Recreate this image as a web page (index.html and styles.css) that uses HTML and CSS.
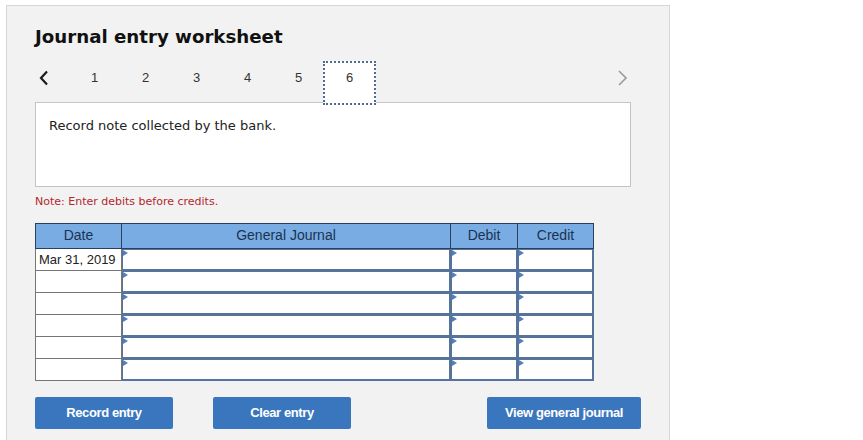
FILE: index.html
```html
<!DOCTYPE html>
<html>
<head>
<meta charset="utf-8">
<link rel="stylesheet" href="styles.css">
</head>
<body>
<div class="panel">
  <h1 class="title">Journal entry worksheet</h1>
  <div class="nav">
    <div class="nav-prev">
      <svg width="12" height="16" viewBox="0 0 12 16"><polyline points="9,1.5 3,8 9,14.5" fill="none" stroke="#1a1a1a" stroke-width="2.2"/></svg>
    </div>
    <div class="tab">1</div>
    <div class="tab">2</div>
    <div class="tab">3</div>
    <div class="tab">4</div>
    <div class="tab">5</div>
    <div class="tab tab-active">6</div>
    <div class="nav-spacer"></div>
    <div class="nav-next">
      <svg width="12" height="18" viewBox="0 0 12 18"><polyline points="2,2 9,9 2,16" fill="none" stroke="#9a9a9a" stroke-width="1.6"/></svg>
    </div>
  </div>
  <div class="desc">Record note collected by the bank.</div>
  <div class="note">Note: Enter debits before credits.</div>
  <table class="journal">
    <colgroup>
      <col class="c-date"><col class="c-gj"><col class="c-dr"><col class="c-cr">
    </colgroup>
    <thead>
      <tr><th>Date</th><th>General Journal</th><th>Debit</th><th>Credit</th></tr>
    </thead>
    <tbody>
      <tr><td class="date">Mar 31, 2019</td><td class="in"><div class="box"></div></td><td class="in"><div class="box"></div></td><td class="in"><div class="box"></div></td></tr>
      <tr><td class="date"></td><td class="in"><div class="box"></div></td><td class="in"><div class="box"></div></td><td class="in"><div class="box"></div></td></tr>
      <tr><td class="date"></td><td class="in"><div class="box"></div></td><td class="in"><div class="box"></div></td><td class="in"><div class="box"></div></td></tr>
      <tr><td class="date"></td><td class="in"><div class="box"></div></td><td class="in"><div class="box"></div></td><td class="in"><div class="box"></div></td></tr>
      <tr><td class="date"></td><td class="in"><div class="box"></div></td><td class="in"><div class="box"></div></td><td class="in"><div class="box"></div></td></tr>
      <tr><td class="date"></td><td class="in"><div class="box"></div></td><td class="in"><div class="box"></div></td><td class="in"><div class="box"></div></td></tr>
    </tbody>
  </table>
  <div class="actions">
    <button class="btn btn-record">Record entry</button>
    <button class="btn btn-clear">Clear entry</button>
    <div class="spacer"></div>
    <button class="btn btn-view">View general journal</button>
  </div>
</div>
</body>
</html>
```
FILE: styles.css
```css
html, body {
  margin: 0;
  padding: 0;
  background: #ffffff;
}
body {
  font-family: "DejaVu Sans", Verdana, sans-serif;
  color: #222;
}
.panel {
  margin: 5px 0 0 6px;
  height: 440px;
  box-sizing: border-box;
  width: 664px;
  background: #f2f2f2;
  border: 1px solid #d6d6d6;
  border-bottom: none;
  padding: 0 0 0 28px;
}
.title {
  margin: 0;
  padding-top: 20px;
  height: 35px;
  font-size: 18.2px;
  font-weight: bold;
  color: #111;
  line-height: 22px;
}
.nav {
  display: flex;
  height: 44px;
  width: 596px;
}
.nav-prev {
  width: 34px;
  padding-top: 9px;
  padding-left: 3px;
  box-sizing: border-box;
}
.tab {
  width: 51px;
  height: 44px;
  box-sizing: border-box;
  text-align: center;
  padding-top: 9px;
  font-family: "Liberation Sans", Arial, sans-serif;
  font-size: 13px;
  color: #333;
}
.tab-active {
  background: #fff;
  border: 2px dotted #4e6b96;
  width: 53px;
  margin-left: -1px;
  padding-top: 7px;
  position: relative;
  z-index: 2;
}
.nav-spacer { flex: 1; }
.nav-next {
  width: 14px;
  padding-top: 8px;
}
.desc {
  margin-top: -3px;
  width: 596px;
  height: 85px;
  box-sizing: border-box;
  background: #fff;
  border: 1px solid #c4c4c4;
  padding: 15px 0 0 13px;
  font-size: 13px;
  color: #222;
  position: relative;
  z-index: 1;
}
.note {
  margin-top: 8px;
  height: 28px;
  font-size: 11px;
  color: #b3272d;
}
.journal {
  border-collapse: collapse;
  table-layout: fixed;
  width: 558px;
  font-family: "Liberation Sans", Arial, sans-serif;
  font-size: 13px;
}
.c-date { width: 86px; }
.c-gj { width: 329px; }
.c-dr { width: 67px; }
.c-cr { width: 76px; }
.journal th {
  background: #78ace3;
  color: #1b3350;
  font-weight: normal;
  font-size: 14px;
  height: 25px;
  padding: 0 0 2px 0;
  box-sizing: border-box;
  border: 1px solid #2b3f5c;
  text-align: center;
}
.journal td {
  padding: 0;
  height: 21px;
}
.journal td.date {
  border: 1px solid #767676;
  background: #fff;
  color: #222;
  padding-left: 3px;
  vertical-align: middle;
}
.journal td.in {
  border: 1px solid #56739c;
  background: #fff;
}
.box {
  height: 21px;
  box-sizing: border-box;
  border: 1px solid #56739c;
  position: relative;
}
.box::before {
  content: "";
  position: absolute;
  left: 0;
  top: 0;
  border-left: 5px solid #4f7fbd;
  border-top: 3.5px solid transparent;
  border-bottom: 3.5px solid transparent;
}
.actions {
  display: flex;
  margin-top: 16px;
  width: 606px;
}
.btn {
  height: 32px;
  border: none;
  border-radius: 2px;
  background: #3a76be;
  color: #fff;
  font-family: "Liberation Sans", Arial, sans-serif;
  font-weight: bold;
  font-size: 13px;
  letter-spacing: -0.4px;
  padding: 0 0 2px 0;
}
.btn-record { width: 138px; }
.btn-clear { width: 138px; margin-left: 40px; }
.spacer { flex: 1; }
.btn-view { width: 154px; }
```
